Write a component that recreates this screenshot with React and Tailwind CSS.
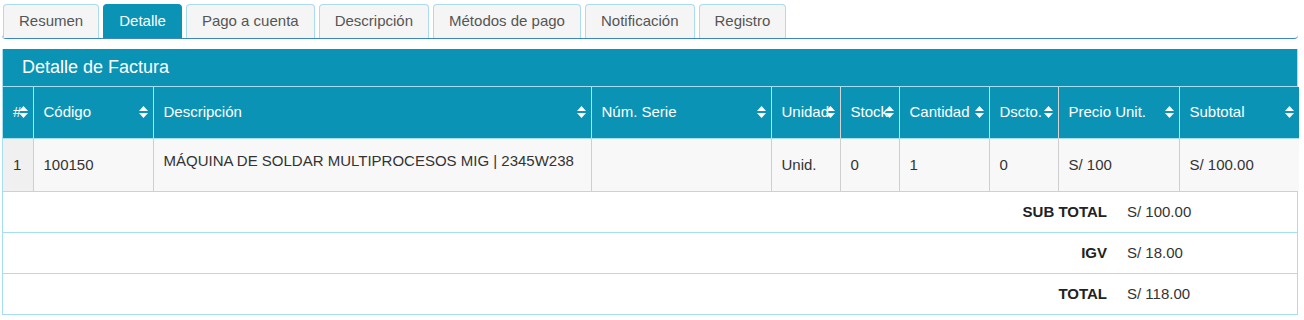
import React from 'react';

const tabs = ['Resumen', 'Detalle', 'Pago a cuenta', 'Descripción', 'Métodos de pago', 'Notificación', 'Registro'];

const columns = [
  { label: '#', width: 30 },
  { label: 'Código', width: 120 },
  { label: 'Descripción', width: 438 },
  { label: 'Núm. Serie', width: 180 },
  { label: 'Unidad', width: 69 },
  { label: 'Stock', width: 59 },
  { label: 'Cantidad', width: 90 },
  { label: 'Dscto.', width: 69 },
  { label: 'Precio Unit.', width: 121 },
  { label: 'Subtotal', width: 120 },
];

const row = ['1', '100150', 'MÁQUINA DE SOLDAR MULTIPROCESOS MIG | 2345W238', '', 'Unid.', '0', '1', '0', 'S/ 100', 'S/ 100.00'];

const totals = [
  { label: 'SUB TOTAL', value: 'S/ 100.00' },
  { label: 'IGV', value: 'S/ 18.00' },
  { label: 'TOTAL', value: 'S/ 118.00' },
];

const SortIcon = () => (
  <svg width="9" height="14" viewBox="0 0 9 14" className="absolute right-[5px] top-1/2 -translate-y-1/2" fill="white">
    <polygon points="0,6 4.5,1 9,6" />
    <polygon points="0,8 4.5,13 9,8" />
  </svg>
);

export default function App() {
  return (
    <div className="w-[1304px] h-[320px] bg-white font-['Liberation_Sans',Arial,sans-serif] text-[#333]">
      <div className="pt-1 px-[2px] w-[1300px]">
        <ul className="flex gap-1 pl-px border-b border-[#3a87c8] rounded-b-[4px]">
          {tabs.map((t) => (
            <li
              key={t}
              className={
                'h-[34px] px-[15px] flex items-center rounded-t-[4px] border border-b-0 text-[15px] ' +
                (t === 'Detalle'
                  ? 'bg-[#0b93b6] border-[#0b93b6] text-white'
                  : 'bg-[#f5f5f5] border-[#aadcee] text-[#555]')
              }
            >
              {t}
            </li>
          ))}
        </ul>
      </div>

      <div className="mt-[10px] ml-[2px] w-[1296px] border-x border-b border-[#a6dff0]">
        <div className="h-[38px] bg-[#0b93b6] text-white text-[18px] flex items-center pl-[19px] border-b border-[#a6dff0]">
          Detalle de Factura
        </div>
        <table className="table-fixed border-collapse w-full">
          <colgroup>
            {columns.map((c) => (
              <col key={c.label} style={{ width: c.width }} />
            ))}
          </colgroup>
          <thead>
            <tr className="h-[51px] bg-[#0b93b6] text-white text-[15px]">
              {columns.map((c, i) => (
                <th
                  key={c.label}
                  className={
                    'relative text-left font-normal pl-[10px] whitespace-nowrap border-[#d4d4d4] ' +
                    (i > 0 ? 'border-l' : '')
                  }
                >
                  {c.label}
                  <SortIcon />
                </th>
              ))}
            </tr>
          </thead>
          <tbody>
            <tr className="h-[53px] bg-[#f8f8f8] text-[15px] border-t border-[#a6dff0]">
              {row.map((v, i) => (
                <td
                  key={i}
                  className={
                    'pl-[10px] border-[#cfcfcf] ' +
                    (i > 0 ? 'border-l ' : 'bg-[#f0f0f0] ') +
                    (i === 2 ? 'align-top pt-[11px]' : 'align-middle')
                  }
                >
                  {v}
                </td>
              ))}
            </tr>
          </tbody>
        </table>
        {totals.map((t) => (
          <div key={t.label} className="h-[41px] flex items-center text-[15px] border-t border-[#a6dff0]">
            <div className="w-[1114px] text-right pr-[10px] font-bold text-[#222]">{t.label}</div>
            <div className="pl-[10px]">{t.value}</div>
          </div>
        ))}
      </div>
    </div>
  );
}
